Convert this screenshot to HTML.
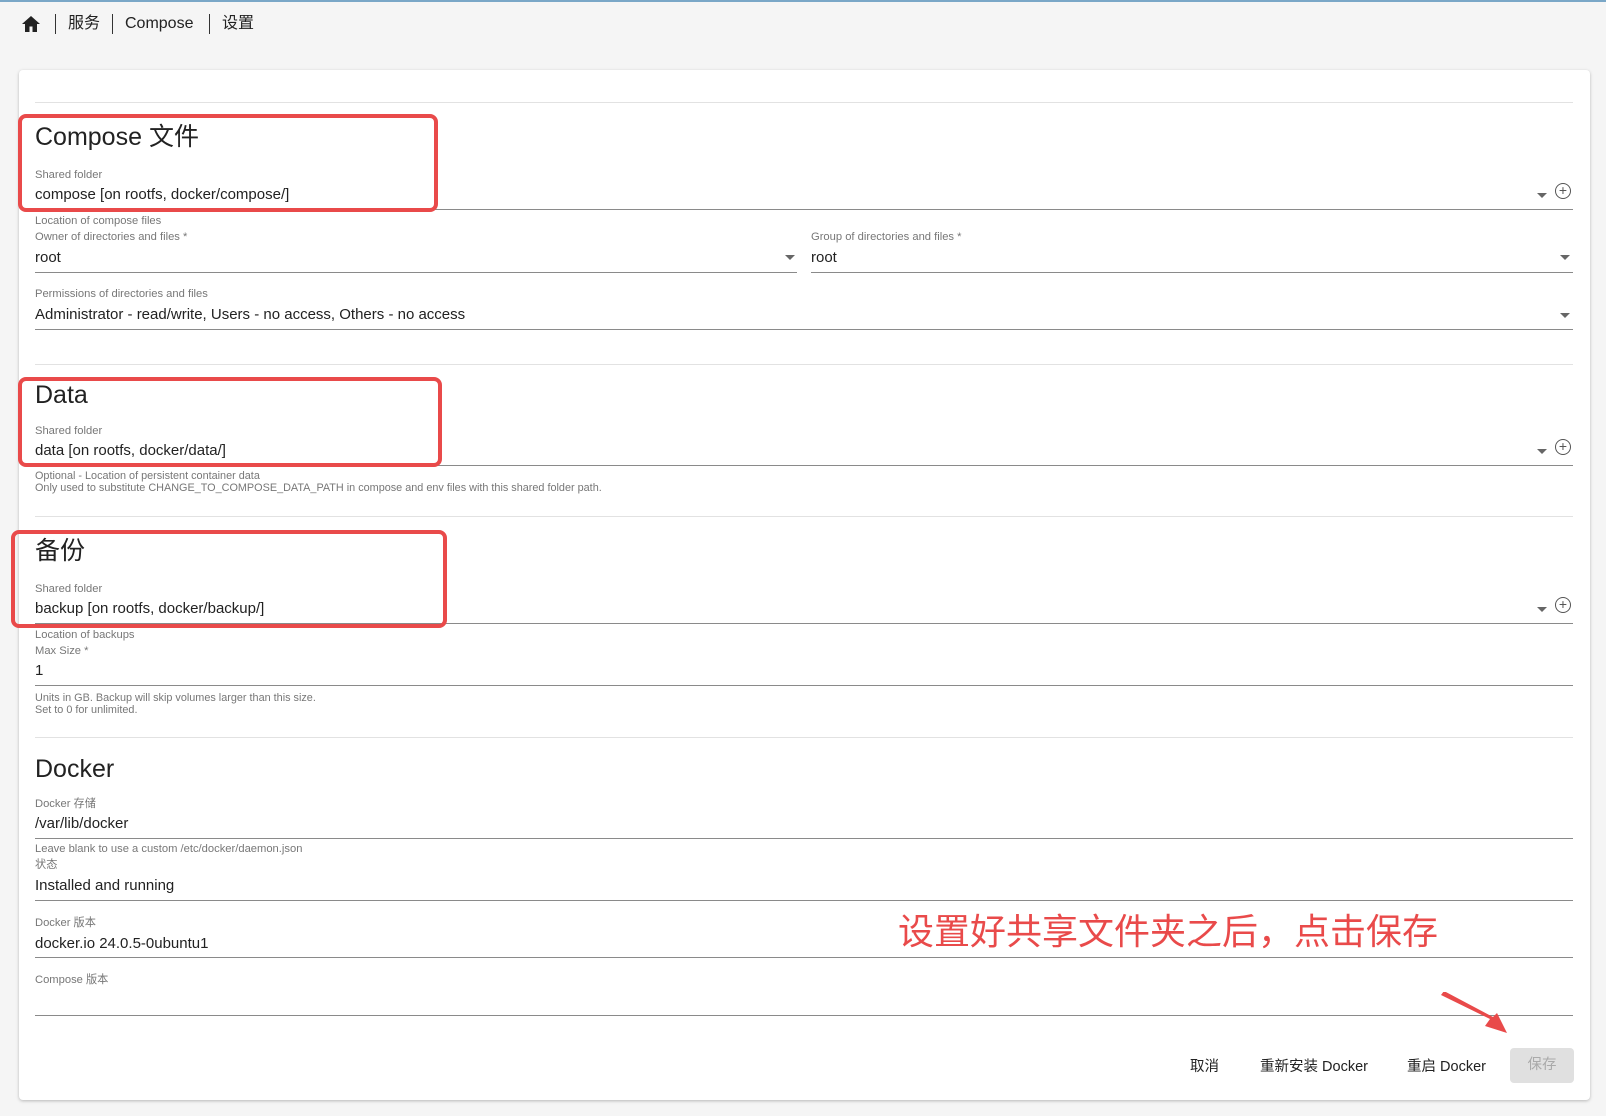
<!DOCTYPE html>
<html><head><meta charset="utf-8"><style>
*{margin:0;padding:0;box-sizing:border-box}
body{width:1606px;height:1116px;background:#f5f5f5;font-family:"Liberation Sans","Noto Sans CJK SC",sans-serif;color:#222;position:relative;overflow:hidden;border-top:2px solid #7aa7c7}
.a{position:absolute;white-space:nowrap;line-height:1.2}
.card{position:absolute;left:19px;top:68px;width:1571px;height:1030px;background:#fff;border-radius:4px;box-shadow:0 1px 3px rgba(0,0,0,.25)}
.lbl{font-size:11.2px;color:#777}
.val{font-size:15px;color:#222}
.ul{position:absolute;height:1px;background:#8a8a8a}
.div{position:absolute;height:1px;background:#e2e2e2;left:35px;width:1538px}
.ttl{font-size:25px;color:#222}
.box{position:absolute;border:4px solid #e94a4a;border-radius:8px}
.arr{position:absolute;width:0;height:0;border-left:5px solid transparent;border-right:5px solid transparent;border-top:5px solid #666}
.plus{position:absolute;width:16px;height:16px;border:1.5px solid #555;border-radius:50%;font-size:14px;line-height:13px;text-align:center;color:#555}
.btn{font-size:14.5px;color:#222}
.hint{font-size:10.85px;color:#777}
.bc{font-size:16px;line-height:20px;top:12px}
</style></head><body>
<svg class="a" style="left:21px;top:13px" width="20" height="18" viewBox="0 0 20 18"><path d="M10 1 L1 9 H4 V17 H8.5 V11.5 H11.5 V17 H16 V9 H19 Z" fill="#222"/></svg>
<div class="a" style="left:55px;top:12px;width:1px;height:20px;background:#333"></div>
<div class="a bc" style="left:68px">服务</div>
<div class="a" style="left:112px;top:12px;width:1px;height:20px;background:#333"></div>
<div class="a bc" style="left:125px;font-family:'Liberation Sans',sans-serif">Compose</div>
<div class="a" style="left:209px;top:12px;width:1px;height:20px;background:#333"></div>
<div class="a bc" style="left:222px">设置</div>

<div class="card"></div>
<div class="div" style="top:100px"></div>

<div class="a ttl" style="left:35px;top:120px">Compose 文件</div>
<div class="a lbl" style="left:35px;top:167px">Shared folder</div>
<div class="a val" style="left:35px;top:184px">compose [on rootfs, docker/compose/]</div>
<div class="ul" style="left:35px;top:207px;width:1538px"></div>
<div class="arr" style="left:1537px;top:191px"></div>
<div class="plus" style="left:1555px;top:181px">+</div>
<div class="a lbl" style="left:35px;top:213px">Location of compose files</div>
<div class="a lbl" style="left:35px;top:229px">Owner of directories and files *</div>
<div class="a val" style="left:35px;top:247px">root</div>
<div class="ul" style="left:35px;top:270px;width:762px"></div>
<div class="arr" style="left:785px;top:253px"></div>
<div class="a lbl" style="left:811px;top:229px">Group of directories and files *</div>
<div class="a val" style="left:811px;top:247px">root</div>
<div class="ul" style="left:811px;top:270px;width:762px"></div>
<div class="arr" style="left:1560px;top:253px"></div>
<div class="a lbl" style="left:35px;top:286px">Permissions of directories and files</div>
<div class="a val" style="left:35px;top:304px">Administrator - read/write, Users - no access, Others - no access</div>
<div class="ul" style="left:35px;top:327px;width:1538px"></div>
<div class="arr" style="left:1560px;top:311px"></div>
<div class="div" style="top:362px"></div>

<div class="a ttl" style="left:35px;top:378px">Data</div>
<div class="a lbl" style="left:35px;top:423px">Shared folder</div>
<div class="a val" style="left:35px;top:440px">data [on rootfs, docker/data/]</div>
<div class="ul" style="left:35px;top:463px;width:1538px"></div>
<div class="arr" style="left:1537px;top:447px"></div>
<div class="plus" style="left:1555px;top:437px">+</div>
<div class="a hint" style="left:35px;top:468px">Optional - Location of persistent container data</div>
<div class="a hint" style="left:35px;top:480px">Only used to substitute CHANGE_TO_COMPOSE_DATA_PATH in compose and env files with this shared folder path.</div>
<div class="div" style="top:514px"></div>

<div class="a ttl" style="left:35px;top:534px">备份</div>
<div class="a lbl" style="left:35px;top:581px">Shared folder</div>
<div class="a val" style="left:35px;top:598px">backup [on rootfs, docker/backup/]</div>
<div class="ul" style="left:35px;top:621px;width:1538px"></div>
<div class="arr" style="left:1537px;top:605px"></div>
<div class="plus" style="left:1555px;top:595px">+</div>
<div class="a lbl" style="left:35px;top:627px">Location of backups</div>
<div class="a lbl" style="left:35px;top:643px">Max Size *</div>
<div class="a val" style="left:35px;top:660px">1</div>
<div class="ul" style="left:35px;top:683px;width:1538px"></div>
<div class="a hint" style="left:35px;top:690px">Units in GB. Backup will skip volumes larger than this size.</div>
<div class="a hint" style="left:35px;top:702px">Set to 0 for unlimited.</div>
<div class="div" style="top:735px"></div>

<div class="a ttl" style="left:35px;top:752px">Docker</div>
<div class="a lbl" style="left:35px;top:796px">Docker 存储</div>
<div class="a val" style="left:35px;top:813px">/var/lib/docker</div>
<div class="ul" style="left:35px;top:836px;width:1538px"></div>
<div class="a lbl" style="left:35px;top:841px">Leave blank to use a custom /etc/docker/daemon.json</div>
<div class="a lbl" style="left:35px;top:857px">状态</div>
<div class="a val" style="left:35px;top:875px">Installed and running</div>
<div class="ul" style="left:35px;top:898px;width:1538px"></div>
<div class="a lbl" style="left:35px;top:915px">Docker 版本</div>
<div class="a val" style="left:35px;top:933px">docker.io 24.0.5-0ubuntu1</div>
<div class="ul" style="left:35px;top:955px;width:1538px"></div>
<div class="a lbl" style="left:35px;top:972px">Compose 版本</div>
<div class="ul" style="left:35px;top:1013px;width:1538px"></div>

<div class="a" style="left:898px;top:906px;font-size:36px;color:#e94a4a;font-family:'Noto Sans CJK SC',sans-serif;line-height:1.2">设置好共享文件夹之后，点击保存</div>
<svg class="a" style="left:1435px;top:990px" width="80" height="45"><path d="M6 3 L55 27 L50 34 L72 41 L62 21 L58 25 L9 -1 Z" fill="#e94a4a"/></svg>

<div class="a btn" style="left:1190px;top:1057px">取消</div>
<div class="a btn" style="left:1260px;top:1057px">重新安装 Docker</div>
<div class="a btn" style="left:1407px;top:1057px">重启 Docker</div>
<div class="a" style="left:1510px;top:1046px;width:64px;height:35px;background:#e0e0e0;border-radius:4px;color:#aaa;font-size:14.5px;text-align:center;line-height:35px">保存</div>

<div class="box" style="left:18px;top:112px;width:420px;height:98px"></div>
<div class="box" style="left:18px;top:375px;width:424px;height:90px"></div>
<div class="box" style="left:11px;top:528px;width:436px;height:98px"></div>
</body></html>
